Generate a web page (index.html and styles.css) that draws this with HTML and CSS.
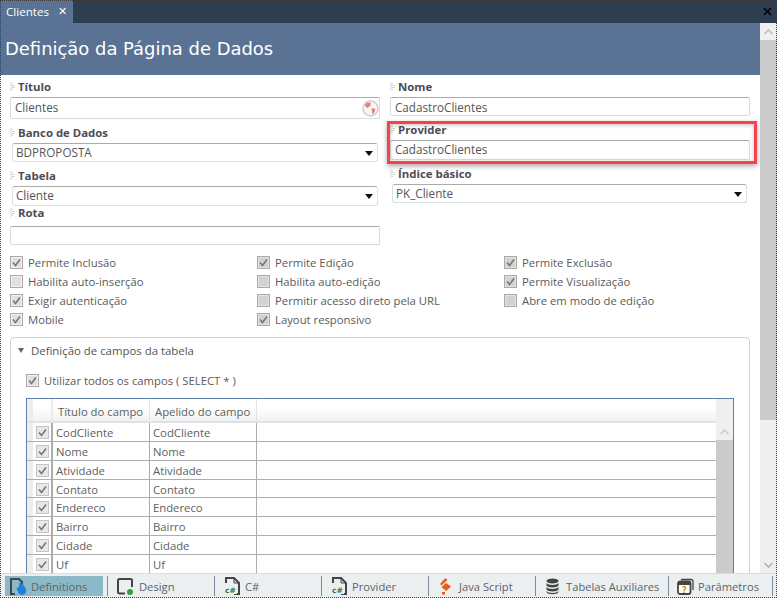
FILE: index.html
```html
<!DOCTYPE html>
<html lang="pt">
<head>
<meta charset="utf-8">
<title>Clientes</title>
<link rel="stylesheet" href="styles.css">
</head>
<body>
<div class="window">
  <svg width="0" height="0" class="defs"><defs>
    <symbol id="grip" viewBox="0 0 6 10"><path d="M0 0v10M2 1v8M4 3v4" stroke="#aaa" stroke-dasharray="1 1" fill="none"/></symbol>
    <symbol id="tick" viewBox="0 0 13 13"><path d="M3 6.500l2.500 3 4.500-6" stroke="#777" stroke-width="1.600" fill="none"/></symbol>
    <symbol id="doc" viewBox="0 0 15 18"><path d="M1 6V1h8l5 5v11H9" stroke="#444" stroke-width="2" fill="none"/><path d="M9 1v5h5" stroke="#444" fill="none"/><rect x="0" y="9" width="12" height="8" fill="#ebeff0"/><text x="0" y="16" class="cs">c#</text></symbol>
  </defs></svg>
  <div class="tabstrip">
    <div class="tab"><span>Clientes</span><span class="tab-x">✕</span></div>
    <svg class="strip-close" width="9" height="9" viewBox="0 0 9 9"><path d="M1 1l7 7M8 1L1 8" stroke="#000" stroke-width="1.600"/></svg>
  </div>
  <div class="body">
    <div class="scrollarea">
      <h1 class="page-title">Definição da Página de Dados</h1>
      <div class="form">
        <div class="col col-left">
          <label class="lbl"><svg class="grip"><use href="#grip"/></svg>Título</label>
          <div class="input input-title">Clientes
            <svg class="globe" width="17" height="17" viewBox="0 0 17 17"><circle cx="8.500" cy="8.500" r="7.500" fill="#f6f6f6" stroke="#cdcdcd" stroke-width="1.500"/><path d="M2.500 5.500l2.500-3 4 .5-.5 2.500-3 2.500zM9.500 8l4 1-1.500 4-1.500 1.500z" fill="#f07c74"/></svg>
          </div>
          <label class="lbl lbl-db"><svg class="grip"><use href="#grip"/></svg>Banco de Dados</label>
          <div class="select">BDPROPOSTA<i class="caret"></i></div>
          <label class="lbl lbl-tb"><svg class="grip"><use href="#grip"/></svg>Tabela</label>
          <div class="select select-tb">Cliente<i class="caret"></i></div>
          <label class="lbl lbl-rt"><svg class="grip"><use href="#grip"/></svg>Rota</label>
          <div class="input input-rt"></div>
        </div>
        <div class="col col-right">
          <label class="lbl"><svg class="grip"><use href="#grip"/></svg>Nome</label>
          <div class="input input-rn">CadastroClientes</div>
          <label class="lbl lbl-pr"><svg class="grip"><use href="#grip"/></svg>Provider</label>
          <div class="input input-rp">CadastroClientes</div>
          <label class="lbl lbl-ix"><svg class="grip"><use href="#grip"/></svg>Índice básico</label>
          <div class="select select-ix">PK_Cliente<i class="caret"></i></div>
        </div>
      </div>
      <div class="checks">
        <div class="chk"><i class="box"><svg><use href="#tick"/></svg></i>Permite Inclusão</div>
        <div class="chk"><i class="box grey"><svg><use href="#tick"/></svg></i>Permite Edição</div>
        <div class="chk"><i class="box grey"><svg><use href="#tick"/></svg></i>Permite Exclusão</div>
        <div class="chk"><i class="box"></i>Habilita auto-inserção</div>
        <div class="chk"><i class="box grey"></i>Habilita auto-edição</div>
        <div class="chk"><i class="box grey"><svg><use href="#tick"/></svg></i>Permite Visualização</div>
        <div class="chk"><i class="box"><svg><use href="#tick"/></svg></i>Exigir autenticação</div>
        <div class="chk"><i class="box grey"></i>Permitir acesso direto pela URL</div>
        <div class="chk"><i class="box grey"></i>Abre em modo de edição</div>
        <div class="chk"><i class="box"><svg><use href="#tick"/></svg></i>Mobile</div>
        <div class="chk"><i class="box grey"><svg><use href="#tick"/></svg></i>Layout responsivo</div>
      </div>
      <section class="group">
        <div class="group-title"><i class="tri"></i>Definição de campos da tabela</div>
        <div class="chk chk-all"><i class="box"><svg><use href="#tick"/></svg></i>Utilizar todos os campos ( SELECT * )</div>
        <div class="grid">
          <div class="grid-main">
            <div class="row head"><span class="ind"></span><span class="c0"></span><span class="c1">Título do campo</span><span class="c2">Apelido do campo</span><span class="c3"></span></div>
            <div class="row"><span class="ind"></span><span class="c0"><i class="cell-box"><svg><use href="#tick"/></svg></i></span><span class="c1">CodCliente</span><span class="c2">CodCliente</span><span class="c3"></span></div>
            <div class="row"><span class="ind"></span><span class="c0"><i class="cell-box"><svg><use href="#tick"/></svg></i></span><span class="c1">Nome</span><span class="c2">Nome</span><span class="c3"></span></div>
            <div class="row"><span class="ind"></span><span class="c0"><i class="cell-box"><svg><use href="#tick"/></svg></i></span><span class="c1">Atividade</span><span class="c2">Atividade</span><span class="c3"></span></div>
            <div class="row"><span class="ind"></span><span class="c0"><i class="cell-box"><svg><use href="#tick"/></svg></i></span><span class="c1">Contato</span><span class="c2">Contato</span><span class="c3"></span></div>
            <div class="row"><span class="ind"></span><span class="c0"><i class="cell-box"><svg><use href="#tick"/></svg></i></span><span class="c1">Endereco</span><span class="c2">Endereco</span><span class="c3"></span></div>
            <div class="row"><span class="ind"></span><span class="c0"><i class="cell-box"><svg><use href="#tick"/></svg></i></span><span class="c1">Bairro</span><span class="c2">Bairro</span><span class="c3"></span></div>
            <div class="row"><span class="ind"></span><span class="c0"><i class="cell-box"><svg><use href="#tick"/></svg></i></span><span class="c1">Cidade</span><span class="c2">Cidade</span><span class="c3"></span></div>
            <div class="row"><span class="ind"></span><span class="c0"><i class="cell-box"><svg><use href="#tick"/></svg></i></span><span class="c1">Uf</span><span class="c2">Uf</span><span class="c3"></span></div>
          </div>
          <div class="vbar vbar-inner">
            <div class="vbtn vbtn-inner"><svg width="9" height="6" viewBox="0 0 9 6"><path d="M.5 5l4-4 4 4" stroke="#c6c6c6" stroke-width="1.300" fill="none"/></svg></div>
            <div class="thumb"></div>
          </div>
        </div>
      </section>
      <div class="highlight"></div>
    </div>
    <div class="vbar vbar-outer">
      <div class="vbtn vbtn-outer"><svg width="9" height="6" viewBox="0 0 9 6"><path d="M.5 5l4-4 4 4" stroke="#bbb" stroke-width="1.300" fill="none"/></svg></div>
      <div class="thumb thumb-outer"></div>
      <div class="vtrack"><svg width="9" height="6" viewBox="0 0 9 6"><path d="M.5 1l4 4 4-4" stroke="#aaa" stroke-width="1.300" fill="none"/></svg></div>
    </div>
  </div>
  <div class="statusbar">
    <div class="stab stab-on w-def">
      <svg width="17" height="17" viewBox="0 0 17 17"><path d="M5 16H1V1h8l3 3v3" stroke="#3f4650" stroke-width="2" fill="none"/><path d="M7 9c.500 1 1 1 1.500.500C9 7 10 5.500 9.500 4c3 1.500 6.500 5.500 6.500 8.500a4 4 0 0 1-8 .5C6.500 12 6.500 10.500 7 9z" fill="#1e7fd8"/></svg>
      <span>Definitions</span>
    </div>
    <div class="stab w-des">
      <svg width="17" height="17" viewBox="0 0 17 17"><path d="M8 15.500H2.500A1.500 1.500 0 0 1 1 14V2.500A1.500 1.500 0 0 1 2.500 1h11A1.500 1.500 0 0 1 15 2.500V9" stroke="#444" stroke-width="2" fill="none"/><circle cx="13" cy="14" r="3" fill="#2f9e44"/></svg>
      <span>Design</span>
    </div>
    <div class="stab w-cs"><svg width="15" height="18"><use href="#doc"/></svg><span>C#</span></div>
    <div class="stab w-pr"><svg width="15" height="18"><use href="#doc"/></svg><span>Provider</span></div>
    <div class="stab w-js">
      <svg width="12" height="17" viewBox="0 0 12 17"><path d="M6.500 0L1 6l1.500 1.500L8.500 2zM7 5l5 3.500L7 13 2.500 9z" fill="#ea5b16"/><rect x="3" y="14" width="3" height="2.500" fill="#ea5b16"/></svg>
      <span>Java Script</span>
    </div>
    <div class="stab w-tb">
      <svg width="13" height="17" viewBox="0 0 13 17"><ellipse cx="6.500" cy="3" rx="6" ry="2.500" fill="#444"/><path d="M.5 5c1 2.500 11 2.500 12 0v2.500c-1 2.500-11 2.500-12 0zM.5 9c1 2.500 11 2.500 12 0v2.500c-1 2.500-11 2.500-12 0zM.5 13c1 2.500 11 2.500 12 0v1c-1 3-11 3-12 0z" fill="#444"/></svg>
      <span>Tabelas Auxiliares</span>
    </div>
    <div class="stab w-pa">
      <svg width="17" height="17" viewBox="0 0 17 17"><path d="M4 1.500h10a2 2 0 0 1 2 2V12" stroke="#444" stroke-width="1.300" fill="none"/><rect x="1" y="3.500" width="12.500" height="12.500" rx="2" fill="#fff" stroke="#444" stroke-width="1.800"/><rect x="1" y="3.500" width="12.500" height="3.500" fill="#444"/><text x="5" y="14.500" class="qm">?</text></svg>
      <span>Parâmetros</span>
    </div>
  </div>
</div>
</body>
</html>
```

FILE: styles.css
```css
* { box-sizing: border-box; }
html, body { margin: 0; padding: 0; background: #fff; }
body { font-family: "Open Sans", "Noto Sans", sans-serif; font-size: 11.3px; color: #555; }
i { display: block; font-style: normal; }
.defs { position: absolute; }
.window { width: 777px; height: 598px; display: flex; flex-direction: column; overflow: hidden; position: relative; }
.window::after { content: ""; position: absolute; inset: 0; border: 1px dotted #3c3c3c; pointer-events: none; }

.tabstrip { height: 23px; background: #2c3e50; display: flex; align-items: stretch; justify-content: space-between; flex: none; }
.tab { width: 73px; background: #5a7394; color: #fff; display: flex; align-items: center; padding: 0 0 0 6px; gap: 9px; font-size: 11.6px; }
.tab-x { font-size: 11px; line-height: 1; margin-top: -2px; }
.strip-close { margin: 7px 5px 0 0; }

.body { flex: 1; display: flex; min-height: 0; }
.scrollarea { width: 760px; position: relative; overflow: hidden; }
.page-title { margin: 0; height: 52px; background: #5a7394; color: #fff; font: 17.95px/52px "DejaVu Sans", sans-serif; padding: 0 0 0 5px; }

.form { display: flex; height: 175px; }
.col { display: flex; flex-direction: column; align-items: flex-start; }
.col-left { width: 380px; padding: 4px 0 0 10px; }
.col-right { width: 380px; padding: 4px 0 0 10px; }
.lbl { display: flex; align-items: center; height: 16px; font-weight: 700; font-size: 11.4px; color: #4d4d55; line-height: 16px; }
.grip { width: 6px; height: 10px; margin-right: 2px; }
.input { border: 1px solid #d6dbe2; border-top-color: #a9a9a9; border-radius: 2px; background: #fff; width: 370px; height: 22px; line-height: 19px; padding-left: 4px; color: #555; font-size: 11.7px; position: relative; margin-top: 2px; }
.input-rt { height: 19px; margin-top: 5px; }
.input-rn, .input-rp { width: 360px; height: 19px; line-height: 18px; }
.input-rp { height: 20px; line-height: 17px; }
.globe { position: absolute; right: 0; top: 2px; }
.select { border: 1px solid #dbdfe6; border-top-color: #ababab; border-radius: 3px; width: 366px; height: 19px; margin: 2px 0 0 2px; padding-left: 3px; line-height: 17px; font-size: 11.7px; position: relative; color: #555; }
.select-tb { height: 20px; line-height: 17px; }
.select-ix { margin-left: 2px; width: 355px; }
.caret { position: absolute; right: 4px; top: 7px; border: 4px solid transparent; border-top: 5px solid #111; border-bottom: 0; }
.lbl-db { margin-top: 6px; }
.lbl-tb { margin-top: 6px; }
.lbl-rt { margin-top: -1px; }
.lbl-pr { margin-top: 6px; }
.lbl-ix { margin-top: 6px; }

.checks { display: grid; grid-template-columns: 247px 247px 246px; grid-auto-rows: 19px; margin: 3px 0 0 10px; }
.chk { display: flex; align-items: center; gap: 5px; color: #5a5a5a; white-space: nowrap; }
.box { width: 13px; height: 13px; border: 1px solid #a9a9a9; background: #e0e0e0; box-shadow: inset 0 0 0 1px #f2f2f2; position: relative; flex: none; }
.box.grey { background: #d2d2d2; box-shadow: inset 0 0 0 1px #e2e2e2; }
.box svg { position: absolute; inset: -1px; width: 13px; height: 13px; }

.group { margin: 8px 0 0 10px; width: 740px; height: 300px; border: 1px solid #cfcfcf; border-radius: 4px 4px 0 0; padding: 0 15px; position: relative; }
.group-title { display: flex; align-items: center; height: 24px; gap: 7px; margin: 0 0 0 -8px; padding-top: 1px; font-size: 11.4px; color: #555; }
.tri { width: 0; height: 0; border: 3.500px solid transparent; border-top: 5px solid #666; border-bottom: 0; }
.chk-all { height: 19px; margin: 9px 0 0 0; }
.grid { margin-top: 8px; width: 708px; height: 220px; border: 1px solid #5d80a8; border-bottom: 0; display: flex; background: #fff; }
.grid-main { flex: 1; min-width: 0; }
.row { display: flex; height: 18.85px; border-bottom: 1px solid #adadad; color: #606060; line-height: 20px; }
.row.head { height: 24px; border-bottom: 2px solid #e2e2e2; background: linear-gradient(#fff 0, #fff 8px, #f0f1f3 100%); line-height: 25px; color: #606060; }
.row > span { display: block; flex: none; }
.ind { width: 6px; background: #eee; }
.c0 { width: 20px; border-right: 2px solid #adadad; position: relative; }
.row.head .c0 { border-right-color: #eaeaea; }
.c1 { width: 97px; border-right: 1px solid #adadad; padding-left: 3px; }
.row.head .c1 { border-right-color: #e4e4e4; padding-left: 5px; }
.c2 { width: 107px; border-right: 1px solid #adadad; padding-left: 3px; }
.row.head .c2 { border-right-color: #e4e4e4; padding-left: 5px; }
.c3 { flex: 1 !important; }
.cell-box { position: absolute; left: 3px; top: 3px; width: 13px; height: 13px; background: #e8e8e8; border: 1px solid #c4c4c4; }
.cell-box svg { position: absolute; inset: -1px; width: 13px; height: 13px; }

.vbar { flex: none; display: flex; flex-direction: column; background: #efefef; }
.vbar-inner { width: 17px; }
.vbar-outer { width: 17px; }
.vbtn { display: flex; align-items: center; justify-content: center; flex: none; }
.vbtn-inner { height: 41px; padding-top: 25px; }
.vbtn-outer { height: 17px; }
.thumb { flex: 1; background: #cbcbcb; }
.thumb-outer { flex: none; height: 380px; }
.vtrack { flex: 1; display: flex; align-items: flex-end; justify-content: center; padding-bottom: 5px; }

.highlight { position: absolute; left: 387px; top: 98px; width: 370px; height: 43px; border: 3px solid #f8424a; box-shadow: 0 2px 5px rgba(0,0,0,.35), inset 0 1px 4px rgba(0,0,0,.25); }

.statusbar { height: 25px; flex: none; background: #ebeff0; border-top: 1px solid #dcdcdc; display: flex; align-items: center; padding: 2px 0 2px 5px; font-size: 11.2px; color: #5a6470; }
.stab { height: 20px; display: flex; align-items: center; flex: none; gap: 5px; padding-left: 5px; }
.stab span { white-space: nowrap; }
.stab-on { background: #8bb9c6; }
.w-def { width: 98px; gap: 4px; }
.w-des { width: 107px; margin-left: 4px; border-left: 1px solid #7b8a9c; padding-left: 9px; }
.w-cs { width: 107px; border-left: 1px solid #7b8a9c; padding-left: 10px; gap: 5px; }
.w-pr { width: 107px; border-left: 1px solid #7b8a9c; padding-left: 10px; gap: 5px; }
.w-js { width: 107px; border-left: 1px solid #7b8a9c; padding-left: 10px; gap: 8px; }
.w-tb { width: 133px; border-left: 1px solid #7b8a9c; padding-left: 10px; gap: 7px; }
.w-pa { width: 105px; border-left: 1px solid #7b8a9c; border-right: 1px solid #7b8a9c; padding-left: 8px; gap: 4px; }
.cs { font: 700 7.500px "DejaVu Sans", sans-serif; fill: #1c7d3c; }
.qm { font: 700 8px "DejaVu Sans", sans-serif; fill: #e08a00; }
```
